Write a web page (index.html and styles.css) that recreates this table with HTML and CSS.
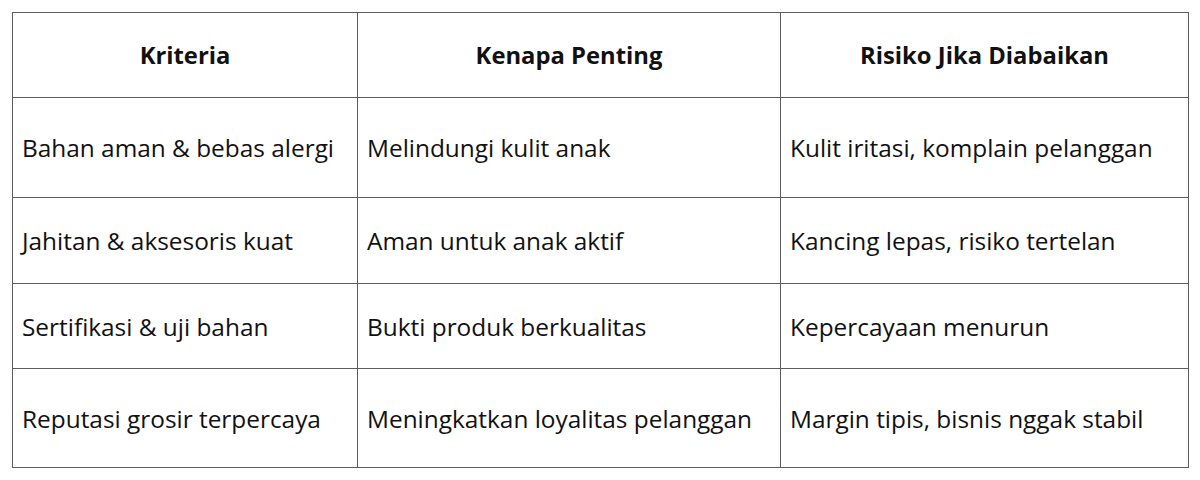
FILE: index.html
```html
<!DOCTYPE html>
<html lang="id">
<head>
<meta charset="utf-8">
<link rel="stylesheet" href="styles.css">
</head>
<body>
<table class="grid">
  <colgroup>
    <col class="c1"><col class="c2"><col class="c3">
  </colgroup>
  <thead>
    <tr class="head">
      <th>Kriteria</th>
      <th>Kenapa Penting</th>
      <th>Risiko Jika Diabaikan</th>
    </tr>
  </thead>
  <tbody>
    <tr class="r1">
      <td>Bahan aman &amp; bebas alergi</td>
      <td>Melindungi kulit anak</td>
      <td>Kulit iritasi, komplain pelanggan</td>
    </tr>
    <tr class="r2">
      <td>Jahitan &amp; aksesoris kuat</td>
      <td>Aman untuk anak aktif</td>
      <td>Kancing lepas, risiko tertelan</td>
    </tr>
    <tr class="r3">
      <td>Sertifikasi &amp; uji bahan</td>
      <td>Bukti produk berkualitas</td>
      <td>Kepercayaan menurun</td>
    </tr>
    <tr class="r4">
      <td>Reputasi grosir terpercaya</td>
      <td>Meningkatkan loyalitas pelanggan</td>
      <td>Margin tipis, bisnis nggak stabil</td>
    </tr>
  </tbody>
</table>
</body>
</html>
```

FILE: styles.css
```css
html, body {
  margin: 0;
  padding: 0;
  background: #ffffff;
}
body {
  padding: 12px;
  font-family: "Open Sans", "Noto Sans", sans-serif;
  color: #111111;
}
.grid {
  border-collapse: collapse;
  table-layout: fixed;
  width: 1176px;
}
.c1 { width: 345px; }
.c2 { width: 423px; }
.c3 { width: 408px; }
.grid th,
.grid td {
  border: 1px solid #5c5c5c;
  padding: 0 9px;
  vertical-align: middle;
  white-space: nowrap;
}
.grid th {
  font-size: 23.8px;
  font-weight: 700;
  text-align: center;
}
.grid td {
  font-size: 24.4px;
  text-align: left;
}
.head { height: 85px; }
.r1 { height: 100px; }
.r2 { height: 86px; }
.r3 { height: 85px; }
.r4 { height: 99px; }
```
